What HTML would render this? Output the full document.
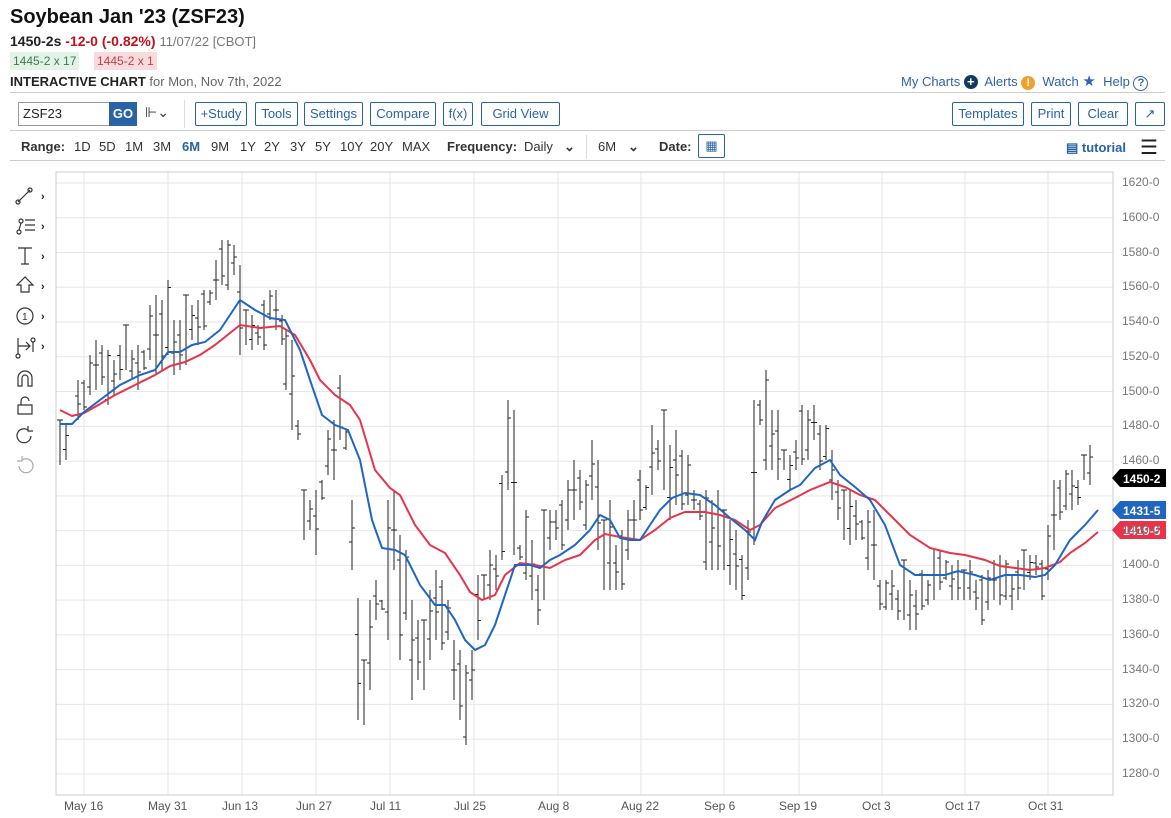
<!DOCTYPE html>
<html><head><meta charset="utf-8"><style>
*{margin:0;padding:0;box-sizing:border-box}
body{width:1171px;height:818px;background:#fff;font-family:"Liberation Sans",sans-serif;position:relative;overflow:hidden;color:#222}
.a{position:absolute;white-space:nowrap}
.btn{position:absolute;top:102px;height:24px;border:1px solid #2a62a6;border-radius:2px;color:#2a62a6;font-size:13px;line-height:22px;text-align:center}
.hr{position:absolute;left:10px;right:6px;height:1px;background:#ccc}
.rg{color:#333;font-size:13px;position:absolute;top:139px;white-space:nowrap}
.lk{color:#2f63a8;font-size:13px}
.ax{position:absolute;left:1122px;font-size:12px;color:#777}
.xl{position:absolute;top:799px;font-size:12px;color:#555}
</style></head><body>
<div class="a" style="left:10px;top:6px;font-size:20px;font-weight:bold;color:#111">Soybean Jan '23 (ZSF23)</div>
<div class="a" style="left:10px;top:33px;font-size:14px"><b>1450-2s</b> <b style="color:#c0121c">-12-0 (-0.82%)</b> <span style="color:#777;font-size:13px">11/07/22 [CBOT]</span></div>
<div class="a" style="left:10px;top:52px;font-size:12px;background:#e3f3e8;color:#3a7d4c;padding:2px 3px">1445-2 x 17</div>
<div class="a" style="left:94px;top:52px;font-size:12px;background:#f8dcdd;color:#c0404a;padding:2px 3px">1445-2 x 1</div>
<div class="a" style="left:10px;top:74px;font-size:13px"><b>INTERACTIVE CHART</b> <span style="color:#666">for Mon, Nov 7th, 2022</span></div>
<div class="a lk" style="left:901px;top:72px">My Charts <span style="display:inline-block;width:14px;height:14px;border-radius:7px;background:#123a5e;color:#fff;font-size:13px;line-height:14px;text-align:center;font-weight:bold">+</span>&nbsp; Alerts <span style="display:inline-block;width:14px;height:14px;border-radius:7px;background:#f0a030;color:#fff;font-size:11px;line-height:14px;text-align:center;font-weight:bold">!</span>&nbsp; Watch <span style="color:#2a62c0;font-size:15px">★</span>&nbsp; Help <span style="display:inline-block;width:15px;height:15px;border-radius:8px;border:1.5px solid #2f63a8;font-size:11px;line-height:12px;text-align:center;font-weight:bold">?</span></div>
<div class="hr" style="top:92px"></div>
<div class="a" style="left:18px;top:102px;width:92px;height:24px;border:1px solid #999;font-size:13px;line-height:22px;padding-left:4px">ZSF23</div>
<div class="a" style="left:109px;top:102px;width:28px;height:24px;background:#2a62a6;color:#fff;font-weight:bold;font-size:13px;line-height:24px;text-align:center">GO</div>
<div class="a" style="left:145px;top:104px;font-size:14px;color:#333">⊩⌄</div>
<div class="a" style="left:184px;top:100px;width:1px;height:28px;background:#ddd"></div>
<div class="btn" style="left:195px;width:52px">+Study</div>
<div class="btn" style="left:255px;width:43px">Tools</div>
<div class="btn" style="left:304px;width:59px">Settings</div>
<div class="btn" style="left:370px;width:66px">Compare</div>
<div class="btn" style="left:443px;width:30px">f(x)</div>
<div class="btn" style="left:481px;width:79px">Grid View</div>
<div class="btn" style="left:952px;width:72px">Templates</div>
<div class="btn" style="left:1031px;width:40px">Print</div>
<div class="btn" style="left:1078px;width:50px">Clear</div>
<div class="btn" style="left:1135px;width:30px">↗</div>
<div class="hr" style="top:130px"></div>
<div class="rg" style="left:21px"><b>Range:</b></div>
<div class="rg" style="left:74px">1D</div><div class="rg" style="left:99px">5D</div><div class="rg" style="left:125px">1M</div><div class="rg" style="left:153px">3M</div>
<div class="rg" style="left:182px;color:#2a62a6;font-weight:bold">6M</div><div class="rg" style="left:211px">9M</div><div class="rg" style="left:240px">1Y</div><div class="rg" style="left:264px">2Y</div>
<div class="rg" style="left:290px">3Y</div><div class="rg" style="left:315px">5Y</div><div class="rg" style="left:340px">10Y</div><div class="rg" style="left:370px">20Y</div><div class="rg" style="left:402px">MAX</div>
<div class="rg" style="left:447px"><b>Frequency:</b></div><div class="rg" style="left:524px">Daily</div><div class="rg" style="left:564px;font-weight:bold">⌄</div>
<div class="a" style="left:586px;top:135px;width:1px;height:24px;background:#ddd"></div>
<div class="rg" style="left:598px">6M</div><div class="rg" style="left:628px;font-weight:bold">⌄</div><div class="rg" style="left:659px"><b>Date:</b></div>
<div class="a" style="left:698px;top:134px;width:27px;height:24px;border:1px solid #2a62a6;border-radius:2px;color:#2a62a6;text-align:center;font-size:13px;line-height:22px">▦</div>
<div class="a" style="left:1066px;top:140px;font-size:13px;color:#2a62a6;font-weight:bold">▤ tutorial</div>
<div class="a" style="left:1140px;top:135px;font-size:20px;color:#222">☰</div>
<div class="hr" style="top:160px"></div>
<svg class="a" style="left:0;top:0" width="1171" height="818" id="sv">
<g stroke="#333" fill="none" stroke-width="1.2">
<path d="M18 202l7-7M25 195l5-5"/><circle cx="30" cy="190" r="2"/><circle cx="18" cy="202" r="2"/>
<circle cx="21" cy="221" r="2"/><circle cx="19" cy="232" r="2"/><path d="M21 223l-2 7M25 220h10M25 225h10M25 230h10"/>
<path d="M18 248h14M25 248v16M21 264h8"/>
<path d="M25 277l-8 8h4v7h8v-7h4z"/>
<circle cx="25" cy="316" r="8"/>
<path d="M18 338v16M18 346h12M26 342l4 4-4 4M33 342v10"/><circle cx="33" cy="340" r="2"/><circle cx="18" cy="356" r="2"/>
<path d="M18 386v-8a7 7 0 0 1 14 0v8h-4v-8a3 3 0 0 0-6 0v8z"/>
<path d="M18 405h14v9h-14zM21 405v-4a4 4 0 0 1 8 0"/>
<path d="M31 436a7 7 0 1 1-3-6M28 426v5h5"/>
<path stroke="#aaa" d="M19 466a7 7 0 1 0 3-6M22 456v5h-5"/>
</g>
<text x="22" y="320" font-size="10" fill="#333" font-family="Liberation Sans">1</text>
<g fill="#222" font-size="11" font-family="Liberation Sans" font-weight="bold">
<text x="41" y="200">›</text><text x="41" y="230">›</text><text x="41" y="260">›</text><text x="41" y="290">›</text><text x="41" y="320">›</text><text x="41" y="350">›</text>
</g>
<g id="grid" stroke="#e6e6e6"></g>
<rect x="56" y="172" width="1057" height="623" fill="none" stroke="#ccc"/>
<g id="bars" stroke="#222" stroke-width="1"></g>
<polyline id="red" fill="none" stroke="#e8334a" stroke-width="2"/>
<polyline id="blue" fill="none" stroke="#1f66c2" stroke-width="2"/>
<path d="M1112 478l8-9h46v18h-46z" fill="#000"/>
<path d="M1112 510l8-9h46v18h-46z" fill="#1f66c2"/>
<path d="M1112 530l8-9h46v18h-46z" fill="#e8334a"/>
<g fill="#fff" font-size="12" font-weight="bold" font-family="Liberation Sans"><text x="1123" y="483">1450-2</text><text x="1123" y="515">1431-5</text><text x="1123" y="535">1419-5</text></g>
</svg>
<div id="labels"></div>
<script>
var g=document.getElementById('grid'),L=document.getElementById('labels'),h='',lh='';
for(var i=0;i<=17;i++){var p=1620-i*20,y=183+i*34.76;h+='<line x1="56" x2="1113" y1="'+y+'" y2="'+y+'"/>';if(p!=1440)lh+='<div class="ax" style="top:'+(y-8)+'px">'+p+'-0</div>';}
var xs=[[84,'May 16'],[168,'May 31'],[242,'Jun 13'],[316,'Jun 27'],[390,'Jul 11'],[474,'Jul 25'],[558,'Aug 8'],[641,'Aug 22'],[724,'Sep 6'],[799,'Sep 19'],[882,'Oct 3'],[965,'Oct 17'],[1048,'Oct 31']];
xs.forEach(function(a){h+='<line y1="172" y2="795" x1="'+a[0]+'" x2="'+a[0]+'"/>';lh+='<div class="xl" style="left:'+(a[0]-20)+'px">'+a[1]+'</div>';});
g.innerHTML=h;L.innerHTML=lh;
var B=[[60,420,465],[66,425,460],[78,380,420],[84,380,410],[90,355,395],[96,340,390],[102,345,385],[108,350,405],[114,360,395],[120,345,380],[126,325,370],[132,350,380],[138,345,390],[144,350,370],[150,305,360],[156,295,375],[162,300,370],[168,280,355],[174,320,375],[180,320,370],[186,295,365],[192,305,340],[198,300,345],[204,290,330],[210,290,305],[216,260,300],[222,240,285],[228,240,290],[234,245,275],[240,265,355],[246,310,345],[252,315,350],[258,325,345],[264,300,350],[270,290,320],[276,290,330],[282,315,345],[286,330,390],[292,340,430],[298,420,440],[304,490,540],[310,500,530],[316,490,555],[322,480,500],[328,430,475],[334,420,480],[340,375,440],[346,430,450],[352,500,570],[358,598,720],[364,660,725],[370,600,690],[376,580,620],[382,600,610],[388,500,640],[394,490,570],[400,535,660],[406,550,620],[412,600,700],[418,620,680],[424,620,690],[430,590,660],[436,570,640],[442,580,650],[448,600,640],[454,640,700],[460,650,720],[466,665,745],[472,650,700],[478,575,640],[484,575,600],[490,550,600],[496,555,590],[502,475,560],[508,400,490],[514,410,555],[520,545,560],[526,510,580],[532,540,600],[538,575,625],[544,510,600],[550,510,550],[556,510,540],[562,500,550],[568,480,530],[574,460,520],[580,470,510],[586,480,530],[592,440,500],[598,460,550],[604,520,590],[610,500,590],[616,545,590],[622,530,590],[628,510,560],[634,500,540],[640,470,520],[646,485,510],[652,425,495],[658,440,470],[664,410,490],[670,445,520],[676,430,505],[682,450,510],[688,455,505],[694,490,510],[700,500,520],[706,490,570],[712,500,570],[718,490,570],[724,510,570],[730,520,585],[736,530,590],[742,555,600],[748,520,580],[754,400,545],[760,400,425],[766,370,470],[772,410,470],[778,410,480],[784,450,470],[790,455,490],[796,440,470],[802,405,465],[808,410,460],[814,405,440],[820,425,470],[826,425,460],[832,450,500],[838,480,520],[844,490,540],[850,490,545],[856,500,540],[862,520,540],[868,510,570],[874,510,580],[880,580,610],[886,580,610],[892,570,610],[898,590,620],[904,560,620],[910,580,630],[916,590,630],[922,570,610],[928,580,605],[934,550,600],[940,550,590],[946,560,580],[952,565,600],[958,560,600],[964,570,600],[970,560,600],[976,580,610],[982,575,625],[988,570,610],[994,560,600],[1000,555,605],[1006,560,600],[1012,575,610],[1018,560,600],[1024,550,590],[1030,555,580],[1036,555,575],[1042,560,600],[1048,525,580],[1054,480,550],[1060,480,520],[1066,470,510],[1072,470,510],[1078,480,505],[1084,455,480],[1090,445,485]];
var s='';B.forEach(function(b,i){var r=b[2]-b[1],o=b[1]+r*((i*37%10)/10),c=b[1]+r*((i*53%10)/10);s+='<path d="M'+b[0]+' '+b[1]+'V'+b[2]+'M'+(b[0]-3)+' '+o+'h3M'+b[0]+' '+c+'h3"/>';});
document.getElementById('bars').innerHTML=s;
document.getElementById('blue').setAttribute('points',"60,424 72,424 84,412 100,400 120,385 140,375 155,370 168,352 180,352 192,345 205,342 220,330 240,300 255,310 270,318 285,320 300,350 310,380 322,415 335,425 348,430 360,460 372,520 382,548 395,550 405,555 420,585 435,605 445,605 455,620 465,640 475,650 485,645 495,625 505,595 515,565 530,565 540,568 550,560 560,555 575,545 590,530 600,515 610,520 620,538 630,540 640,540 650,525 660,510 672,498 685,493 700,495 715,505 730,518 745,530 755,540 762,522 775,500 790,490 800,485 815,468 830,460 840,475 855,487 870,500 885,525 900,565 915,575 930,575 945,575 958,571 975,575 990,580 1005,575 1020,575 1035,577 1045,575 1055,565 1070,540 1085,525 1098,510");
document.getElementById('red').setAttribute('points',"60,410 72,416 84,413 100,404 115,395 135,385 155,375 170,366 185,362 200,355 215,345 240,325 260,328 280,326 295,335 310,360 320,380 335,395 350,405 360,420 375,470 390,488 400,495 415,525 430,545 445,553 460,575 470,592 482,600 495,595 505,575 520,563 535,565 550,568 565,560 580,555 595,540 605,534 620,537 640,540 655,530 670,518 685,512 705,512 720,515 735,520 750,530 760,525 775,508 795,498 810,490 830,482 845,487 860,495 875,500 890,515 910,535 930,548 950,553 965,555 985,560 1000,566 1015,568 1030,570 1045,568 1060,562 1070,553 1085,543 1098,532");
</script>
</body></html>
